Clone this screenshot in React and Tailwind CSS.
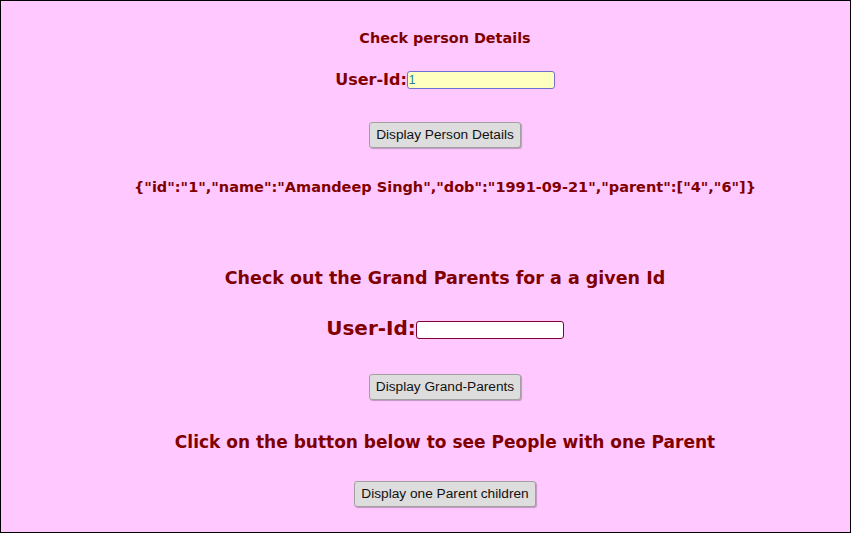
import React, { useState } from "react";

const comic = { fontFamily: '"Comic Sans MS", "DejaVu Sans", sans-serif' };

function Btn({ children }) {
  return (
    <button className="h-[26px] px-[6px] bg-[#dddddd] border border-[#a0a0a0] rounded-[3px] shadow-[1px_1px_1px_rgba(0,0,0,0.25)] text-[13.7px] font-normal text-[#111] font-['Liberation_Sans',Arial,sans-serif]">
      {children}
    </button>
  );
}

export default function App() {
  const [id1, setId1] = useState("1");
  const [id2, setId2] = useState("");

  return (
    <div className="h-[533px] w-[851px] border border-black bg-[#ffc8ff] pl-[39px] text-[#800000] font-bold text-center" style={comic}>
      <div className="mt-[26px] h-[22px] leading-[22px] text-[14.4px]">Check person Details</div>

      <div className="mt-[21px] h-[20px] flex items-center justify-center text-[16px]">
        <span>User-Id:</span>
        <input
          value={id1}
          onChange={(e) => setId1(e.target.value)}
          className="w-[148px] h-[18px] bg-[#ffffc0] border border-[#7070d0] rounded-[3px] px-[1px] text-[12px] font-normal text-[#2080a0] outline-none font-['Liberation_Sans',Arial,sans-serif]"
        />
      </div>

      <div className="mt-[32px] flex justify-center">
        <Btn>Display Person Details</Btn>
      </div>

      <div className="mt-[28px] h-[22px] leading-[22px] text-[14.5px]">
        {'{"id":"1","name":"Amandeep Singh","dob":"1991-09-21","parent":["4","6"]}'}
      </div>

      <div className="mt-[67px] h-[26px] leading-[26px] text-[17.5px]">Check out the Grand Parents for a a given Id</div>

      <div className="mt-[25px] h-[24px] flex items-center justify-center text-[20px]">
        <span>User-Id:</span>
        <input
          value={id2}
          onChange={(e) => setId2(e.target.value)}
          className="w-[148px] h-[18px] bg-white border border-[#800030] rounded-[3px] px-[1px] text-[12px] font-normal outline-none mt-[3px]"
        />
      </div>

      <div className="mt-[34px] flex justify-center">
        <Btn>Display Grand-Parents</Btn>
      </div>

      <div className="mt-[29px] h-[26px] leading-[26px] text-[17px]">Click on the button below to see People with one Parent</div>

      <div className="mt-[26px] flex justify-center">
        <Btn>Display one Parent children</Btn>
      </div>
    </div>
  );
}
